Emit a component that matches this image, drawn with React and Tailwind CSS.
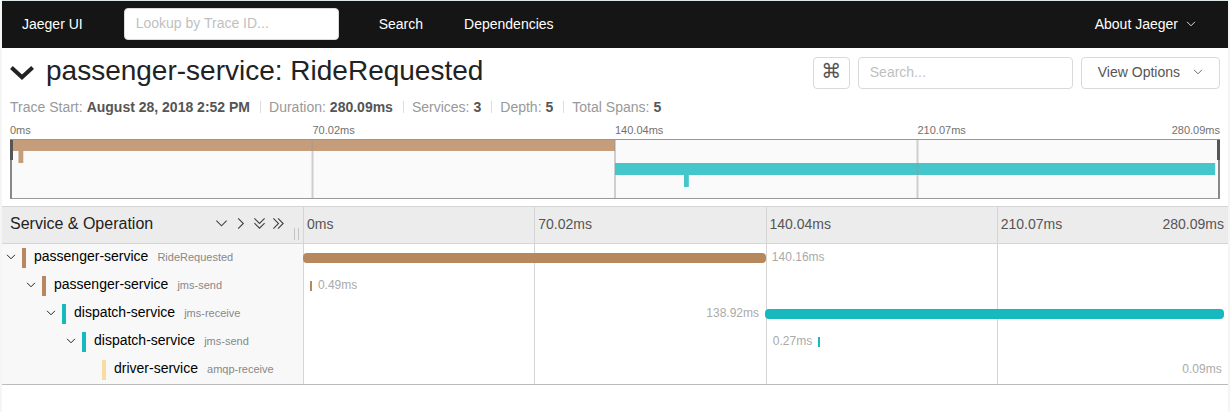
import React from "react";

const TICKS = ["0ms", "70.02ms", "140.04ms", "210.07ms"];
const TOTAL = "280.09ms";

const SUMMARY = [
  ["Trace Start", "August 28, 2018 2:52 PM"],
  ["Duration", "280.09ms"],
  ["Services", "3"],
  ["Depth", "5"],
  ["Total Spans", "5"],
];

const BROWN = "#b7885e";
const TEAL = "#17b8be";
const SAND = "#f8dca1";

const SPANS = [
  { service: "passenger-service", op: "RideRequested", depth: 0, color: BROWN, start: 0, width: 50.04, label: "140.16ms", side: "right" },
  { service: "passenger-service", op: "jms-send", depth: 1, color: BROWN, start: 0.75, width: 0.2, label: "0.49ms", side: "right" },
  { service: "dispatch-service", op: "jms-receive", depth: 2, color: TEAL, start: 49.95, width: 49.6, label: "138.92ms", side: "left" },
  { service: "dispatch-service", op: "jms-send", depth: 3, color: TEAL, start: 55.7, width: 0.1, label: "0.27ms", side: "left" },
  { service: "driver-service", op: "amqp-receive", depth: 4, color: SAND, start: 99.97, width: 0.03, label: "0.09ms", side: "left", leaf: true },
];

const MINI_BARS = [
  { x: "0%", y: 0, width: "50%", color: "#c59d7b" },
  { x: "0.7%", y: 12, width: "0.4%", color: "#c59d7b" },
  { x: "50%", y: 24, width: "49.6%", color: "#45c6cb" },
  { x: "55.7%", y: 36, width: "0.4%", color: "#45c6cb" },
];

const ICON_PATHS = {
  down: "M1.5 4 7 9.5 12.5 4",
  right: "M4.5 1.5 10 7l-5.5 5.5",
  doubleDown: "M1.5 1.5 7 7l5.5-5.5M1.5 6.5 7 12l5.5-5.5",
  doubleRight: "M1.5 1.5 7 7l-5.5 5.5M6.5 1.5 12 7l-5.5 5.5",
};

function Icon({ name, className }) {
  return (
    <svg viewBox="0 0 14 14" className={className} fill="none" stroke="currentColor" strokeWidth="1.2" aria-hidden="true">
      <path d={ICON_PATHS[name]} />
    </svg>
  );
}

function NavBar() {
  return (
    <nav className="flex h-12 items-center border-t border-[#dde6e8] bg-[#151515] pb-0.5 text-sm text-white">
      <a href="#home" className="ml-5">Jaeger UI</a>
      <input
        aria-label="Lookup by Trace ID"
        placeholder="Lookup by Trace ID..."
        className="ml-[41px] h-8 w-[215px] rounded border border-[#d9d9d9] bg-white px-[11px] pb-0.5 text-black placeholder:text-[#bfbfbf]"
      />
      <a href="#search" className="ml-10">Search</a>
      <a href="#dependencies" className="ml-[41px]">Dependencies</a>
      <button className="mr-8 ml-auto flex items-center gap-2">
        About Jaeger
        <Icon name="down" className="size-2.5" />
      </button>
    </nav>
  );
}

function TraceHeader() {
  return (
    <header>
      <div className="flex items-center gap-2 px-2 pt-[9px]">
        <button className="flex flex-1 items-center gap-3 text-left text-[#222]" aria-label="Collapse trace header">
          <svg viewBox="0 0 24 14" className="h-3.5 w-6" fill="none" stroke="currentColor" strokeWidth="4" aria-hidden="true">
            <path d="M1.4 1.6 12 11.2 22.6 1.6" />
          </svg>
          <h1 className="pb-1 text-[28px] leading-7">passenger-service: RideRequested</h1>
        </button>
        <button aria-label="Keyboard shortcuts" className="h-8 w-[37px] rounded border border-[#d9d9d9] pb-1 font-['DejaVu_Sans'] text-xl leading-6 text-[#555]">
          ⌘
        </button>
        <input
          aria-label="Search spans"
          placeholder="Search..."
          className="h-8 w-[215px] rounded border border-[#d9d9d9] px-[11px] pb-0.5 text-sm placeholder:text-[#bfbfbf]"
        />
        <button className="flex h-8 items-center gap-[13px] rounded border border-[#d9d9d9] px-4 pb-0.5 text-sm text-[#555]">
          View Options
          <Icon name="down" className="size-2.5" />
        </button>
      </div>
      <dl className="flex px-2 pt-2 pb-[5px] text-sm leading-5">
        {SUMMARY.map(([name, value], i) => (
          <div key={name} className="flex items-center gap-1">
            {i > 0 && <span className="mr-1 ml-2.5 h-3 w-px bg-[#ddd]" />}
            <dt className="text-[#999]">{name}:</dt>
            <dd className="font-bold text-[#555]">{value}</dd>
          </div>
        ))}
      </dl>
    </header>
  );
}

function Minimap() {
  return (
    <section aria-label="Trace overview" className="px-2 pb-[7px]">
      <div className="grid grid-cols-4 pb-px text-[11px] leading-4 text-[#717171]">
        {TICKS.map((t, i) => (
          <span key={t} className="flex justify-between">
            {t}
            {i === 3 && <span>{TOTAL}</span>}
          </span>
        ))}
      </div>
      <svg className="block h-[60px] w-full overflow-visible" role="img" aria-label="Span overview chart">
        <rect width="100%" height="60" fill="#fafafa" />
        {MINI_BARS.map((b) => (
          <rect key={b.y} x={b.x} y={b.y} width={b.width} height="12" fill={b.color} />
        ))}
        {["25%", "50%", "75%"].map((x) => (
          <line key={x} x1={x} x2={x} y1="1" y2="59" stroke="#999" strokeOpacity="0.45" strokeWidth="2" />
        ))}
        <line x1="0" x2="100%" y1="0.5" y2="0.5" stroke="#999" />
        <line x1="0" x2="100%" y1="59.5" y2="59.5" stroke="#999" />
        <line x1="1" x2="1" y1="0" y2="60" stroke="#888" strokeWidth="2" />
        <line x1="100%" x2="100%" y1="0" y2="60" stroke="#888" strokeWidth="2" transform="translate(-1 0)" />
        <rect x="0" y="1" width="3" height="20" fill="#555" />
        <rect x="100%" y="1" width="3" height="20" fill="#555" transform="translate(-3 0)" />
      </svg>
    </section>
  );
}

function TimelineHeader() {
  return (
    <div className="flex h-[38px] border-y border-[#d5d5d5] bg-[#ececec]">
      <div className="flex w-[301px] shrink-0 items-center pl-2">
        <h2 className="flex-1 pb-0.5 text-base text-[#222]">Service &amp; Operation</h2>
        <div className="flex gap-1.5 pb-1 text-[#444]">
          <button aria-label="Collapse one level"><Icon name="down" className="size-[13px]" /></button>
          <button aria-label="Expand one level"><Icon name="right" className="size-[13px]" /></button>
          <button aria-label="Collapse all"><Icon name="doubleDown" className="size-[13px]" /></button>
          <button aria-label="Expand all"><Icon name="doubleRight" className="size-[13px]" /></button>
        </div>
        <span className="mr-1 mb-[3px] ml-[9px] h-3 w-[5px] self-end border-x border-[#c4c4c4]" />
      </div>
      <div className="grid flex-1 grid-cols-4 text-sm text-[#555]">
        {TICKS.map((t, i) => (
          <div key={t} className="flex items-center justify-between border-l border-[#d5d5d5] pr-1 pb-0.5 pl-[3px]">
            <span>{t}</span>
            {i === 3 && <span>{TOTAL}</span>}
          </div>
        ))}
      </div>
    </div>
  );
}

function SpanBar({ span }) {
  const label = <span className="block px-1.5 pb-0.5 text-xs text-[#aaa]">{span.label}</span>;
  const bar = (
    <span
      className={`h-2.5 min-w-0.5 shrink-0 ${span.width < 1 ? "" : "rounded"}`}
      style={{ width: `${span.width}%`, backgroundColor: span.color }}
    />
  );
  if (span.side === "right") {
    return (
      <div className="col-start-1 row-start-1 flex items-center">
        <span className="shrink-0" style={{ width: `${span.start}%` }} />
        {bar}
        {label}
      </div>
    );
  }
  return (
    <div className="col-start-1 row-start-1 flex items-center">
      <span className="shrink-0 text-right" style={{ width: `${span.start}%` }}>{label}</span>
      {!span.leaf && bar}
    </div>
  );
}

function SpanRow({ span }) {
  return (
    <div className="flex h-7">
      <div className="flex w-[301px] shrink-0 items-center bg-[#f8f8f8] pl-1">
        <span className="shrink-0" style={{ width: span.depth * 20 }} />
        {span.leaf ? (
          <span className="w-2.5" />
        ) : (
          <button aria-label={`Toggle ${span.service} ${span.op}`} className="pb-0.5 text-black">
            <Icon name="down" className="size-2.5" />
          </button>
        )}
        <span className="ml-1.5 h-5 w-1" style={{ backgroundColor: span.color }} />
        <a href="#span" className="ml-2 flex items-baseline gap-[9px] pb-1 leading-5">
          <span className="text-sm text-black">{span.service}</span>
          <span className="text-[11px] text-[#888]">{span.op}</span>
        </a>
      </div>
      <div className="grid flex-1">
        <div className="col-start-1 row-start-1 grid grid-cols-4">
          {TICKS.map((t) => (
            <span key={t} className="border-l border-[#d5d5d5]" />
          ))}
        </div>
        <SpanBar span={span} />
      </div>
    </div>
  );
}

export default function App() {
  return (
    <div className="min-h-screen bg-[#f5f5f5] px-0.5 font-['Liberation_Sans',Arial,sans-serif]">
      <main className="min-h-screen bg-white">
        <NavBar />
        <TraceHeader />
        <Minimap />
        <section aria-label="Trace timeline" className="border-b border-[#bbb]">
          <TimelineHeader />
          {SPANS.map((s) => (
            <SpanRow key={`${s.service}-${s.op}`} span={s} />
          ))}
        </section>
      </main>
    </div>
  );
}
